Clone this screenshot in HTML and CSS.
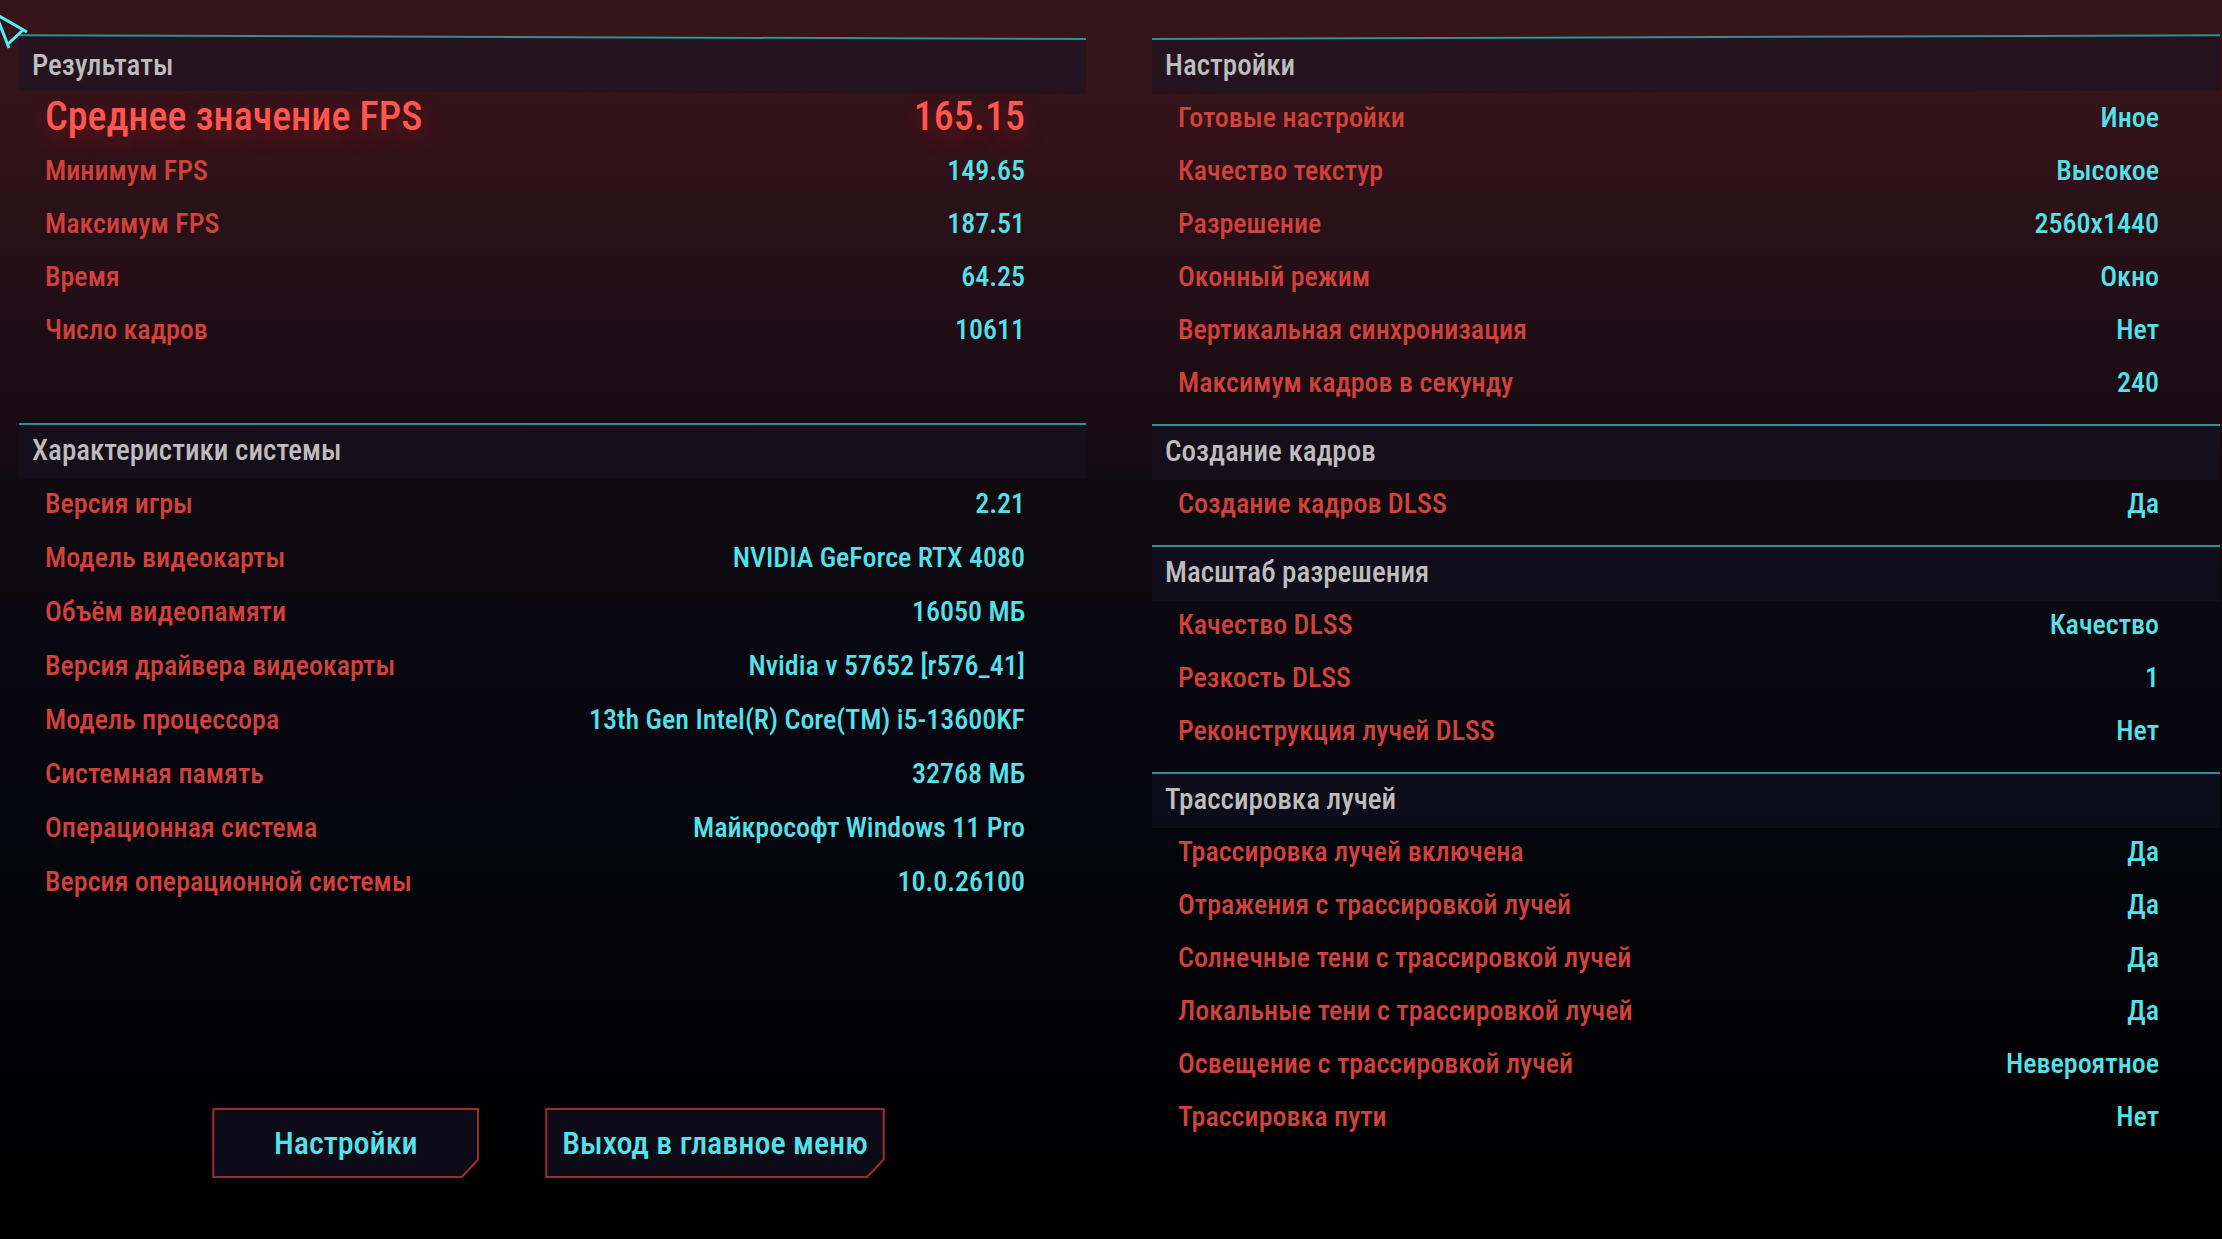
FILE: index.html
```
<!DOCTYPE html>
<html lang="ru">
<head>
    <meta charset="UTF-8">
    <meta name="viewport" content="width=device-width, initial-scale=1.0">
    <title>Результаты</title>
    <link rel="stylesheet" href="styles.css">
</head>
<body>
    <main class="benchmark">
        <div class="column column-left">
            <section class="block block-results">
                <h2 class="block-title tilt-down">Результаты</h2>
                <dl class="rows">
                    <div class="row row-main"><dt>Среднее значение FPS</dt><dd>165.15</dd></div>
                    <div class="row"><dt>Минимум FPS</dt><dd>149.65</dd></div>
                    <div class="row"><dt>Максимум FPS</dt><dd>187.51</dd></div>
                    <div class="row"><dt>Время</dt><dd>64.25</dd></div>
                    <div class="row"><dt>Число кадров</dt><dd>10611</dd></div>
                </dl>
            </section>

            <section class="block block-system">
                <h2 class="block-title">Характеристики системы</h2>
                <dl class="rows">
                    <div class="row"><dt>Версия игры</dt><dd>2.21</dd></div>
                    <div class="row"><dt>Модель видеокарты</dt><dd>NVIDIA GeForce RTX 4080</dd></div>
                    <div class="row"><dt>Объём видеопамяти</dt><dd>16050 МБ</dd></div>
                    <div class="row"><dt>Версия драйвера видеокарты</dt><dd>Nvidia v 57652 [r576_41]</dd></div>
                    <div class="row"><dt>Модель процессора</dt><dd>13th Gen Intel(R) Core(TM) i5-13600KF</dd></div>
                    <div class="row"><dt>Системная память</dt><dd>32768 МБ</dd></div>
                    <div class="row"><dt>Операционная система</dt><dd>Майкрософт Windows 11 Pro</dd></div>
                    <div class="row"><dt>Версия операционной системы</dt><dd>10.0.26100</dd></div>
                </dl>
            </section>

            <div class="actions">
                <button type="button" class="cut-button">Настройки</button>
                <button type="button" class="cut-button">Выход в главное меню</button>
            </div>
        </div>

        <div class="column column-right">
            <section class="block">
                <h2 class="block-title tilt-up">Настройки</h2>
                <dl class="rows">
                    <div class="row"><dt>Готовые настройки</dt><dd>Иное</dd></div>
                    <div class="row"><dt>Качество текстур</dt><dd>Высокое</dd></div>
                    <div class="row"><dt>Разрешение</dt><dd>2560x1440</dd></div>
                    <div class="row"><dt>Оконный режим</dt><dd>Окно</dd></div>
                    <div class="row"><dt>Вертикальная синхронизация</dt><dd>Нет</dd></div>
                    <div class="row"><dt>Максимум кадров в секунду</dt><dd>240</dd></div>
                </dl>
            </section>

            <section class="block">
                <h2 class="block-title">Создание кадров</h2>
                <dl class="rows">
                    <div class="row"><dt>Создание кадров DLSS</dt><dd>Да</dd></div>
                </dl>
            </section>

            <section class="block">
                <h2 class="block-title">Масштаб разрешения</h2>
                <dl class="rows">
                    <div class="row"><dt>Качество DLSS</dt><dd>Качество</dd></div>
                    <div class="row"><dt>Резкость DLSS</dt><dd>1</dd></div>
                    <div class="row"><dt>Реконструкция лучей DLSS</dt><dd>Нет</dd></div>
                </dl>
            </section>

            <section class="block">
                <h2 class="block-title">Трассировка лучей</h2>
                <dl class="rows">
                    <div class="row"><dt>Трассировка лучей включена</dt><dd>Да</dd></div>
                    <div class="row"><dt>Отражения с трассировкой лучей</dt><dd>Да</dd></div>
                    <div class="row"><dt>Солнечные тени с трассировкой лучей</dt><dd>Да</dd></div>
                    <div class="row"><dt>Локальные тени с трассировкой лучей</dt><dd>Да</dd></div>
                    <div class="row"><dt>Освещение с трассировкой лучей</dt><dd>Невероятное</dd></div>
                    <div class="row"><dt>Трассировка пути</dt><dd>Нет</dd></div>
                </dl>
            </section>
        </div>
    </main>

    <svg class="cursor" width="30" height="52" viewBox="0 0 30 52" aria-hidden="true">
        <path d="M-8 12 L27 32 M-5 12 L9 48 M23 30 L8 44" />
    </svg>
</body>
</html>
```
FILE: styles.css
```
* {
    box-sizing: border-box;
}

body {
    margin: 0;
    min-height: 100vh;
    font-family: "Roboto Condensed", Roboto, "Liberation Sans", sans-serif;
    font-size: 28px;
    font-weight: 500;
    line-height: 32px;
    color: #d2413a;
    background: linear-gradient(#37141a 0%, #331319 10%, #240f17 22%, #1b0c14 32%, #100a11 41%, #0a0811 50%, #05050d 68%, #020206 82%, #000 100%);
}

.benchmark {
    display: grid;
    grid-template-columns: 1067fr 1068fr;
    column-gap: 66px;
    min-height: 100vh;
    padding: 38px 2px 61px 19px;
}

.column {
    display: flex;
    flex-direction: column;
}

.block {
    padding-bottom: 12px;
}

.block-results {
    padding-bottom: 64px;
}

.block-title {
    position: relative;
    margin: 0;
    padding: 11px 13px 13px;
    font-size: 29px;
    font-weight: 500;
    line-height: 32px;
    color: #bebcbd;
}

/* title bar and its line, separate from the text so it can be tilted */
.block-title::before {
    content: "";
    position: absolute;
    inset: 0;
    z-index: -1;
    border-top: 2px solid #319094;
    background: rgba(20, 20, 36, 0.5);
}

.tilt-down::before {
    transform: skewY(0.2deg);
    transform-origin: right;
}

.tilt-up::before {
    transform: skewY(-0.2deg);
    transform-origin: left;
}

.rows {
    margin: 0;
}

.row {
    display: flex;
    align-items: center;
    justify-content: space-between;
    height: 53px;
    padding: 0 61px 5px 26px;
}

.block-system .row {
    height: 54px;
}

.row dt {
    white-space: nowrap;
}

.row dd {
    margin: 0;
    text-align: right;
    color: #54e2ea;
}

.row-main {
    padding-bottom: 8px;
}

.row-main,
.row-main dd {
    font-size: 40px;
    color: #ff564f;
    text-shadow: 0 8px 24px rgba(255, 30, 30, 0.3);
}

.actions {
    display: flex;
    justify-content: center;
    gap: 66px;
    margin-top: auto;
    padding-right: 8px;
}

.cut-button {
    position: relative;
    min-width: 267px;
    height: 70px;
    padding: 0 17px;
    border: 0;
    font-family: inherit;
    font-size: 32px;
    font-weight: 500;
    color: #54e2ea;
    background: #9e2c2e;
    clip-path: polygon(0 0, 100% 0, 100% calc(100% - 18px), calc(100% - 17px) 100%, 0 100%);
    cursor: pointer;
}

.cut-button::before {
    content: "";
    position: absolute;
    inset: 2px;
    z-index: -1;
    background: #0c0b17;
    clip-path: polygon(0 0, 100% 0, 100% calc(100% - 17px), calc(100% - 16px) 100%, 0 100%);
}

.cursor {
    position: absolute;
    top: 0;
    left: 0;
    fill: none;
    stroke: #50f0fb;
    stroke-width: 3;
    pointer-events: none;
}
```
